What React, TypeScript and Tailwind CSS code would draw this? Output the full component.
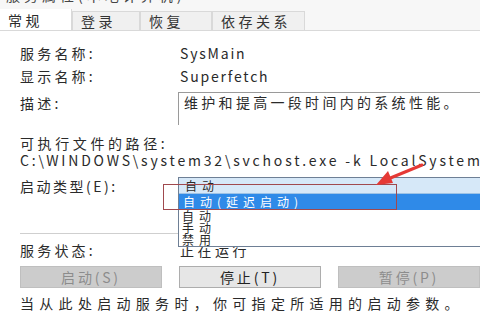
import React from "react";

const font = { fontFamily: '"Noto Sans CJK SC", "Noto Sans", sans-serif' };

const Row = ({ label, value }: { label: string; value: string }) => (
  <div className="flex items-center h-[23px]">
    <span className="w-[180px] pl-[20px] tracking-[3.2px]">{label}</span>
    <span className="tracking-[1.8px]">{value}</span>
  </div>
);

const Tab = ({ label, active, w }: { label: string; active?: boolean; w: string }) => (
  <div
    className={
      active
        ? `${w} h-[21px] bg-white border-r border-[#d9d9d9] pl-[8px] flex items-center tracking-[3.5px]`
        : `${w} h-[19px] mt-[2px] bg-[#f0f0f0] border border-b-0 border-[#d9d9d9] pl-[8px] flex items-center tracking-[3.5px] text-[#333]`
    }
  >
    {label}
  </div>
);

const Btn = ({ label, disabled }: { label: string; disabled?: boolean }) => (
  <div
    className={
      disabled
        ? "w-[142px] h-[22px] bg-[#cccccc] border border-[#bfbfbf] flex items-center justify-center text-[#8c8c8c] tracking-[2.8px]"
        : "w-[142px] h-[22px] bg-[#e6e6e6] border border-[#adadad] flex items-center justify-center text-[#222] tracking-[2.8px]"
    }
  >
    {label}
  </div>
);

export default function App() {
  return (
    <div
      className="relative w-[480px] h-[320px] overflow-hidden bg-white text-[14px] leading-[14px] text-[#2a2a2a]"
      style={font}
    >
      {/* clipped title line */}
      <div className="h-[10px] overflow-hidden bg-[#f7f7f7]">
        <div className="-mt-[12px] pl-[6px] text-[#444] tracking-[4px]">服务属性(本地计算机)</div>
      </div>

      {/* tabs */}
      <div className="flex items-end bg-[#f7f7f7] border-b border-[#d9d9d9] h-[21px]">
        <Tab label="常规" active w="w-[72px]" />
        <Tab label="登录" w="w-[68px]" />
        <Tab label="恢复" w="w-[72px]" />
        <Tab label="依存关系" w="w-[93px]" />
      </div>

      <div className="flex flex-col pt-[10px]">
        <Row label="服务名称:" value="SysMain" />
        <Row label="显示名称:" value="Superfetch" />

        <div className="flex mt-[5px] h-[33px]">
          <span className="w-[178px] pl-[20px] pt-[4px] tracking-[3.2px]">描述:</span>
          <div className="flex-1 border-l border-t border-[#9a9a9a] pl-[5px] pt-[2px] tracking-[3.3px] whitespace-nowrap">
            维护和提高一段时间内的系统性能。
          </div>
        </div>

        <div className="pl-[20px] mt-[11px] tracking-[3.6px]">可执行文件的路径:</div>
        <div className="pl-[20px] mt-[3px] whitespace-nowrap tracking-[2.8px]">
          C:\WINDOWS\system32\svchost.exe -k LocalSystemNetworkRestricted
        </div>

        <div className="pl-[20px] mt-[12px] tracking-[2.5px]">启动类型(E):</div>

        <div className="ml-[20px] mt-[40px] w-[158px] border-t border-[#cfcfcf]" />

        <div className="flex items-center mt-[9px] h-[14px]">
          <span className="w-[180px] pl-[20px] tracking-[3.2px]">服务状态:</span>
          <span className="tracking-[3.5px]">正在运行</span>
        </div>

        <div className="flex gap-[17px] pl-[20px] mt-[9px]">
          <Btn label="启动(S)" disabled />
          <Btn label="停止(T)" />
          <Btn label="暂停(P)" disabled />
        </div>

        <div className="pl-[20px] mt-[8px] tracking-[5.3px] whitespace-nowrap">
          当从此处启动服务时，你可指定所适用的启动参数。
        </div>
      </div>

      {/* open dropdown list */}
      <div className="absolute left-[178px] top-[177px] w-[310px] bg-white border border-[#6e7f95] flex flex-col text-[12px] leading-[12px] tracking-[5px]">
        <div className="h-[16px] bg-[#d6e8f8] border-b border-[#9ec3e6] pl-[6px] flex items-center">自动</div>
        <div className="h-[16px] bg-[#2f8ae8] text-white pl-[4px] flex items-center">自动(延迟启动)</div>
        <div className="h-[12px] pl-[3px] flex items-center">自动</div>
        <div className="h-[12px] pl-[3px] flex items-center">手动</div>
        <div className="h-[12px] pl-[3px] flex items-center">禁用</div>
      </div>

      {/* red highlight box */}
      <div className="absolute left-[163px] top-[184px] w-[234px] h-[26px] border border-[#a0494e]" />

      {/* red arrow */}
      <svg className="absolute left-[370px] top-[160px]" width="60" height="30" viewBox="0 0 60 30">
        <line x1="52" y1="5" x2="18" y2="19" stroke="#e53935" strokeWidth="3" strokeLinecap="round" />
        <polygon points="6,25 18,11 23,23" fill="#e53935" />
      </svg>
    </div>
  );
}
